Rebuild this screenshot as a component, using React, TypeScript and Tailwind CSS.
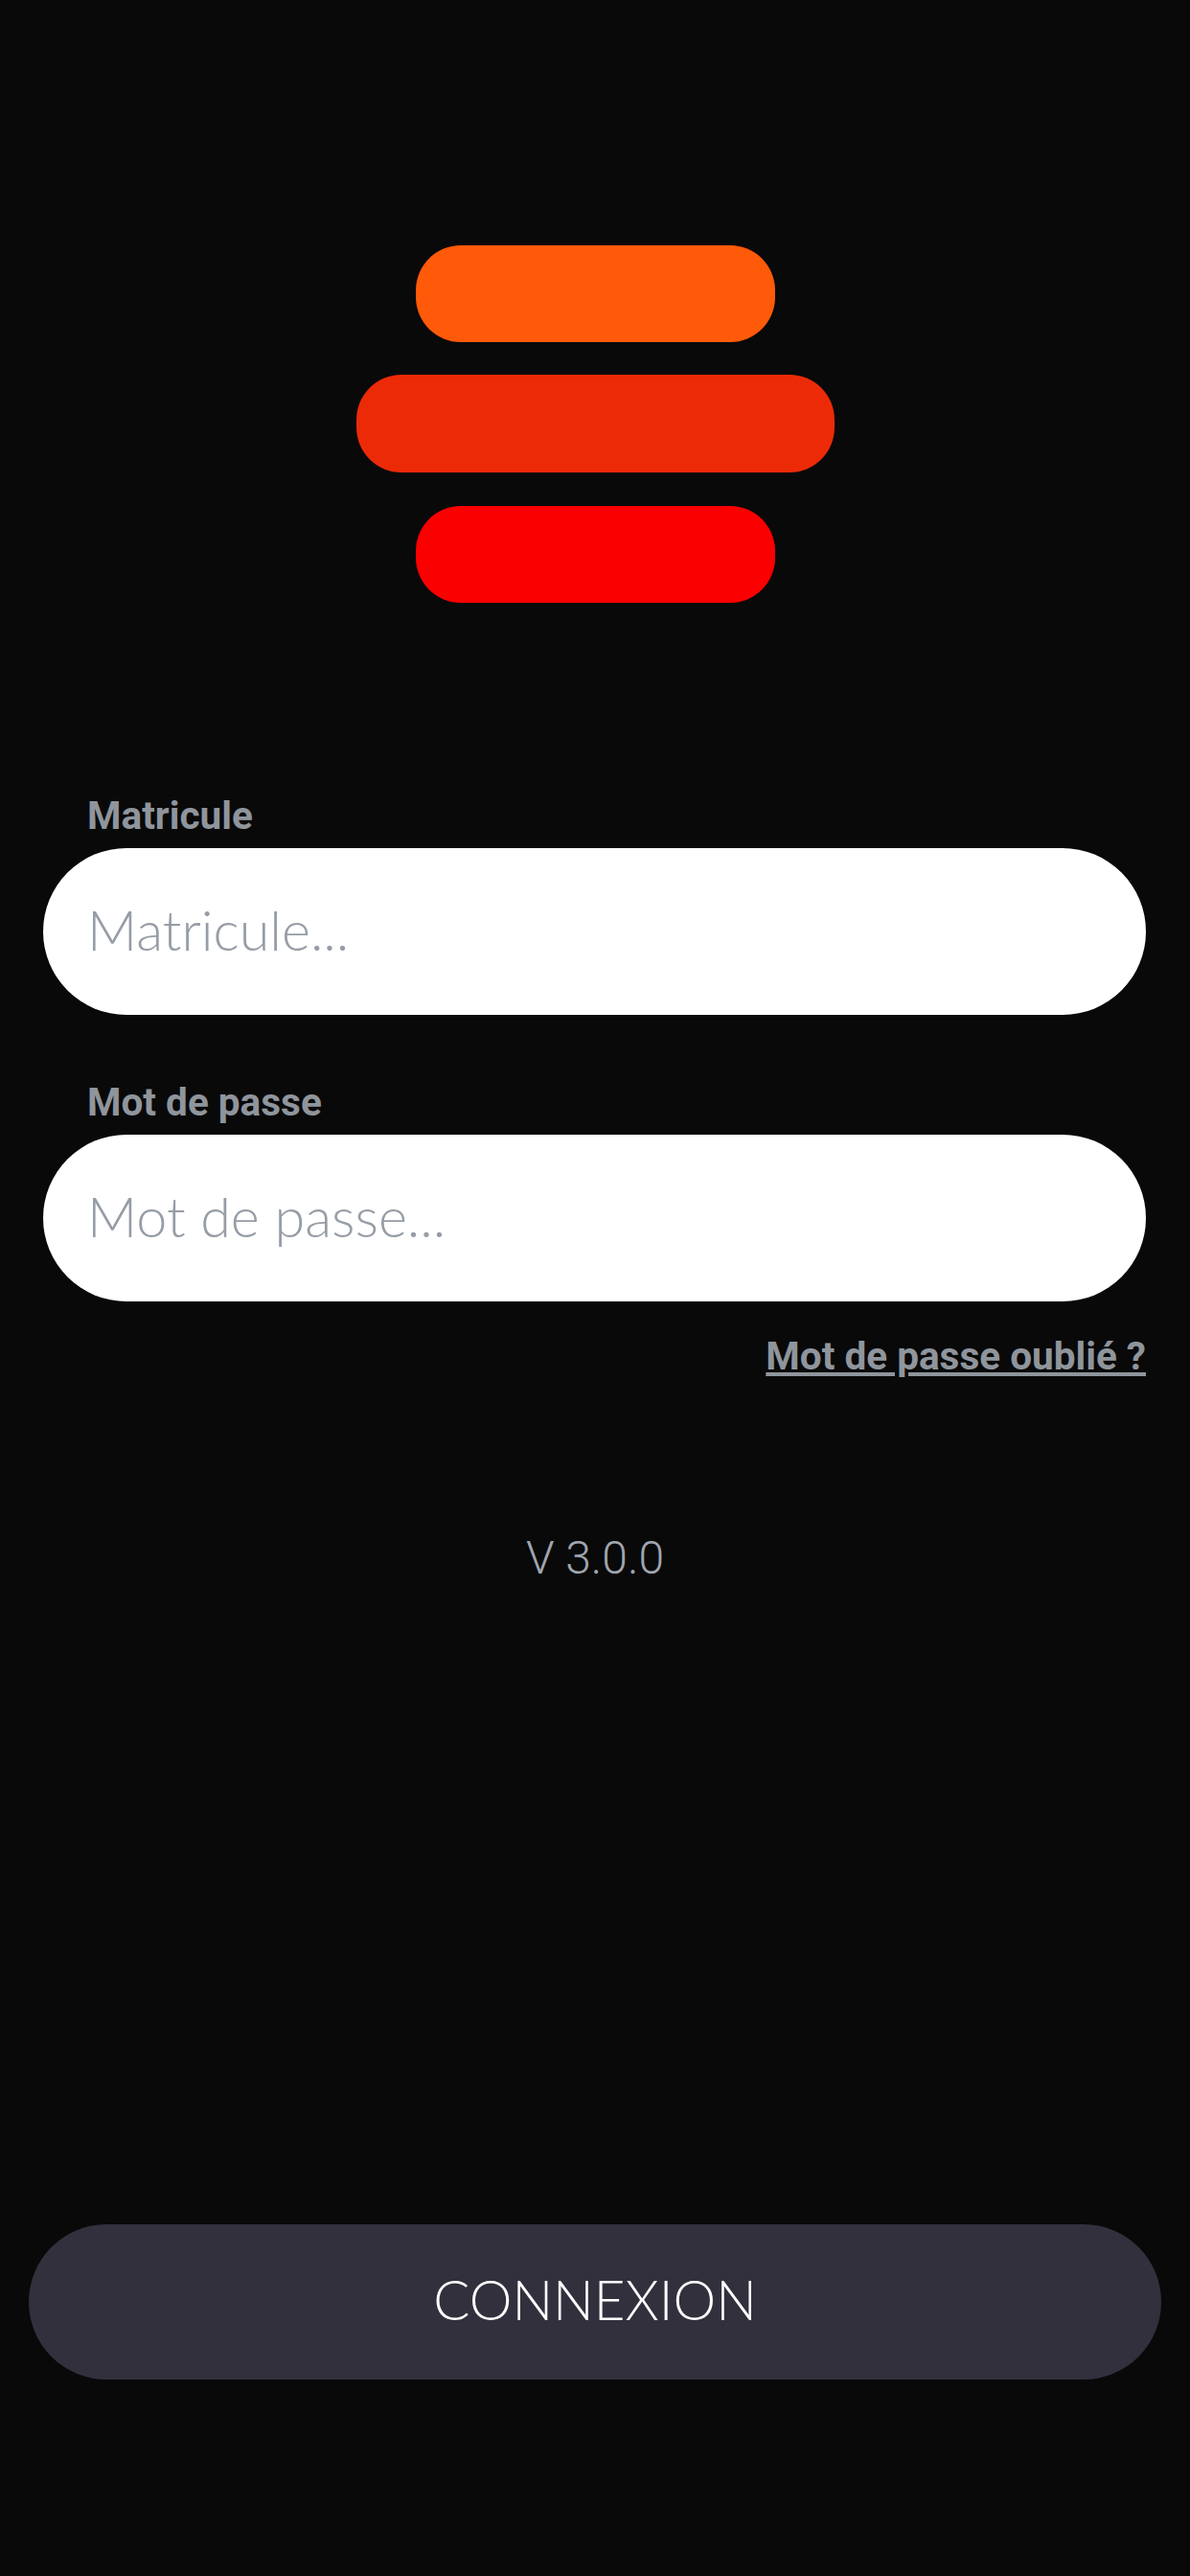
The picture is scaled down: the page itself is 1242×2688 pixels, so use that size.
const roboto = "font-['Roboto',sans-serif]";

function Field({ label, placeholder, type }: { label: string; placeholder: string; type: string }) {
  return (
    <div className="flex flex-col">
      <label className={`${roboto} pl-[46px] h-[50px] text-[40.5px] leading-[32px] font-bold text-[#8f959c]`}>{label}</label>
      <input
        type={type}
        placeholder={placeholder}
        className="w-full h-[174px] rounded-full bg-white pl-[46px] pr-[46px] pb-[6px] text-[57.5px] font-light font-['Lato',sans-serif] text-[#111] outline-none placeholder:text-[#969da6]"
      />
    </div>
  );
}

export default function App() {
  return (
    <div className="w-full h-[2688px] bg-[#09090a] flex flex-col">
      {/* logo */}
      <div className="flex flex-col items-center gap-[34px] pt-[256px] pl-[1px]">
        <div className="w-[375px] h-[101px] rounded-[47px] bg-[#ff5a09]" />
        <div className="w-[499px] h-[102px] mb-[1px] rounded-[47px] bg-[#ec2a08]" />
        <div className="w-[375px] h-[101px] rounded-[47px] bg-[#fb0000]" />
      </div>

      <div className="flex flex-col gap-[75px] mt-[206px] ml-[45px] mr-[46px]">
        <Field label="Matricule" placeholder="Matricule..." type="text" />
        <Field label="Mot de passe" placeholder="Mot de passe..." type="password" />
      </div>

      <div className="flex justify-end mr-[46px] mt-[32px]">
        <a className={`${roboto} text-[40.5px] leading-[50px] font-bold underline text-[#8f959c]`}>Mot de passe oublié ?</a>
      </div>

      <p className={`${roboto} mt-[156px] text-center text-[48px] leading-[60px] font-light text-[#a0a6ae]`}>V 3.0.0</p>

      <button className="mt-auto mb-[205px] mx-[30px] h-[162px] rounded-full bg-[#32303d] pb-[6px] text-white text-[56.5px] font-light font-['Lato',sans-serif]">
        CONNEXION
      </button>
    </div>
  );
}
